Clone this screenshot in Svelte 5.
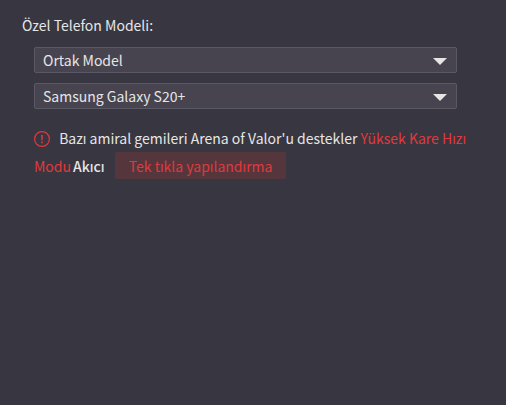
<script lang="ts">
	const MODELS: Record<string, string[]> = {
		'Ortak Model': ['Samsung Galaxy S20+', 'Samsung Galaxy S10', 'OnePlus 8T'],
		'Oyun Modeli': ['ASUS ROG Phone 2', 'Xiaomi Black Shark']
	};

	let category = $state('Ortak Model');
	let model = $state('Samsung Galaxy S20+');

	function pickCategory() {
		model = MODELS[category][0];
	}

	function configure() {
		category = 'Ortak Model';
		model = MODELS[category][0];
	}
</script>

{#snippet arrow()}
	<svg class="arrow" viewBox="0 0 14 7" aria-hidden="true">
		<path d="M0 0h14L7 7z" />
	</svg>
{/snippet}

<main class="panel">
	<h2 class="title" id="model-title">Özel Telefon Modeli:</h2>

	<div class="fields" role="group" aria-labelledby="model-title">
		<div class="field">
			<select aria-label="Model türü" bind:value={category} onchange={pickCategory}>
				{#each Object.keys(MODELS) as name}
					<option value={name}>{name}</option>
				{/each}
			</select>
			{@render arrow()}
		</div>
		<div class="field">
			<select aria-label="Telefon modeli" bind:value={model}>
				{#each MODELS[category] as name}
					<option value={name}>{name}</option>
				{/each}
			</select>
			{@render arrow()}
		</div>
	</div>

	<p class="notice">
		<svg class="warn" viewBox="0 0 16 16" aria-hidden="true">
			<circle cx="8" cy="8" r="7.4" />
			<path d="M7.1 4h1.8l-.3 5.4H7.4zM7.2 10.6h1.6v1.6H7.2z" />
		</svg>
		<span>Bazı amiral gemileri Arena of Valor'u destekler</span>
		<span class="mode">Yüksek Kare Hızı Modu</span><span class="level">Akıcı</span>
		<button class="configure" onclick={configure}>Tek tıkla yapılandırma</button>
	</p>
</main>

<style>
	:global(body) {
		margin: 0;
		background: #383640;
		color: #e6e6e6;
		font-family: 'Noto Sans CJK SC', 'Noto Sans', sans-serif;
		font-size: 14px;
		font-weight: 400;
	}

	.panel {
		padding: 13px 28px 14px 22px;
	}

	.title {
		margin: 0 0 10px;
		font-size: 14px;
		font-weight: 400;
		line-height: 24px;
	}

	.fields {
		display: flex;
		flex-direction: column;
		gap: 10px;
		margin: 0 21px 0 12px;
	}

	.field {
		position: relative;
	}

	select {
		display: block;
		box-sizing: border-box;
		width: 100%;
		height: 26px;
		padding: 0 32px 0 8px;
		appearance: none;
		border: 1px solid #5c5966;
		border-radius: 2px;
		background: #474450;
		color: inherit;
		font: inherit;
		line-height: 24px;
	}

	.arrow {
		position: absolute;
		top: 11px;
		right: 10px;
		width: 14px;
		height: 7px;
		fill: #e6e6e6;
		pointer-events: none;
	}

	.notice {
		margin: 15px 0 0 12px;
		line-height: 28px;
	}

	.warn {
		width: 16px;
		height: 16px;
		margin-right: 6px;
		vertical-align: -3px;
		fill: #e0393c;
	}

	.warn circle {
		fill: none;
		stroke: #e0393c;
		stroke-width: 1.2;
	}

	.mode {
		color: #e0393c;
	}

	.level {
		margin: 0 7px 0 2px;
		font-weight: 500;
	}

	.configure {
		height: 27px;
		padding: 0 14px;
		border: 0;
		border-radius: 2px;
		background: #55363d;
		color: #e0393c;
		font: inherit;
		cursor: pointer;
	}

	.configure:hover {
		background: #643b43;
	}
</style>
